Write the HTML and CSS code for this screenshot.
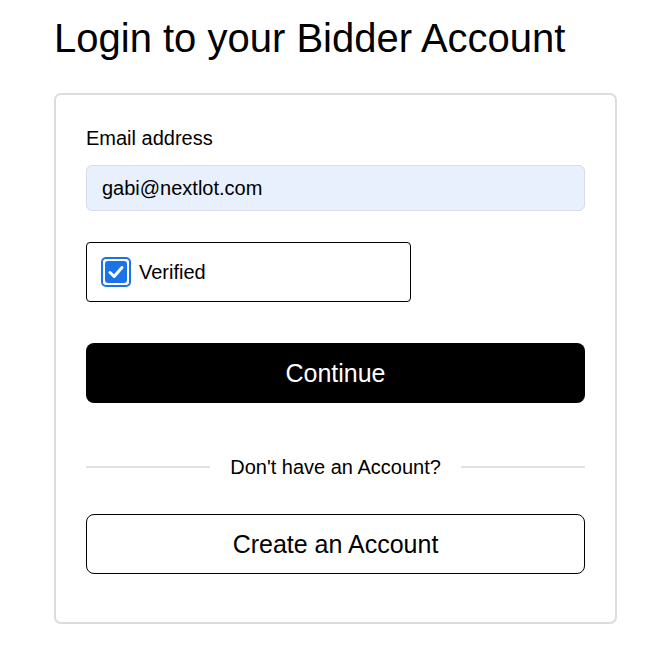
FILE: index.html
```html
<!DOCTYPE html>
<html lang="en">
  <head>
    <meta charset="UTF-8">
    <meta name="viewport" content="width=device-width, initial-scale=1.0">
    <title>Login to your Bidder Account</title>
    <link rel="stylesheet" href="styles.css">
  </head>
  <body>
    <div class="page">
      <h1 class="title">Login to your Bidder Account</h1>
      <form class="card">
        <label class="label" for="email">Email address</label>
        <input class="input" id="email" type="email" value="gabi@nextlot.com">
        <div class="verify">
          <span class="check">
            <svg width="22" height="22" viewBox="0 0 22 22">
              <rect x="0" y="0" width="22" height="22" rx="3" fill="#1a73e8"/>
              <path d="M5 11.5 L9.2 15.5 L17 6.5" fill="none" stroke="#fff" stroke-width="3" stroke-linecap="round" stroke-linejoin="round"/>
            </svg>
          </span>
          <span class="verify-text">Verified</span>
        </div>
        <button class="btn btn-dark" type="button">Continue</button>
        <div class="divider">
          <span class="line"></span>
          <span class="divider-text">Don't have an Account?</span>
          <span class="line"></span>
        </div>
        <button class="btn btn-outline" type="button">Create an Account</button>
      </form>
    </div>
  </body>
</html>
```

FILE: styles.css
```css
body {
  margin: 0;
  font-family: "Liberation Sans", Arial, sans-serif;
  color: #000;
  background: #fff;
}
.page {
  width: 563px;
  margin-left: 54px;
}
.title {
  font-size: 40px;
  font-weight: normal;
  margin: 0;
  padding-top: 16px;
  line-height: 44px;
  height: 77px;
}
.card {
  display: flex;
  flex-direction: column;
  border: 2px solid #dcdcdc;
  border-radius: 7px;
  padding: 31px 30px 48px;
}
.label {
  font-size: 20px;
  line-height: 24px;
  margin-bottom: 15px;
}
.input {
  font-family: inherit;
  font-size: 20px;
  height: 46px;
  box-sizing: border-box;
  padding: 0 15px;
  border: 1px solid #d6dde8;
  border-radius: 6px;
  background: #e8f0fe;
  color: #000;
  outline: none;
}
.verify {
  display: flex;
  align-items: center;
  width: 325px;
  height: 60px;
  box-sizing: border-box;
  margin-top: 31px;
  padding-left: 14px;
  border: 1px solid #000;
  border-radius: 4px;
}
.check {
  display: flex;
  padding: 2px;
  border: 2px solid #1a73e8;
  border-radius: 5px;
  margin-right: 8px;
}
.check svg {
  display: block;
}
.verify-text {
  font-size: 20px;
}
.btn {
  font-family: inherit;
  height: 60px;
  border-radius: 8px;
  font-size: 25px;
  cursor: pointer;
}
.btn-dark {
  margin-top: 41px;
  background: #000;
  color: #fff;
  border: none;
}
.divider {
  display: flex;
  align-items: center;
  gap: 20px;
  margin-top: 52px;
  height: 24px;
}
.line {
  flex: 1;
  height: 2px;
  background: #e0e1e6;
}
.divider-text {
  font-size: 20px;
}
.btn-outline {
  margin-top: 35px;
  background: #fff;
  color: #000;
  border: 1px solid #000;
}
```
